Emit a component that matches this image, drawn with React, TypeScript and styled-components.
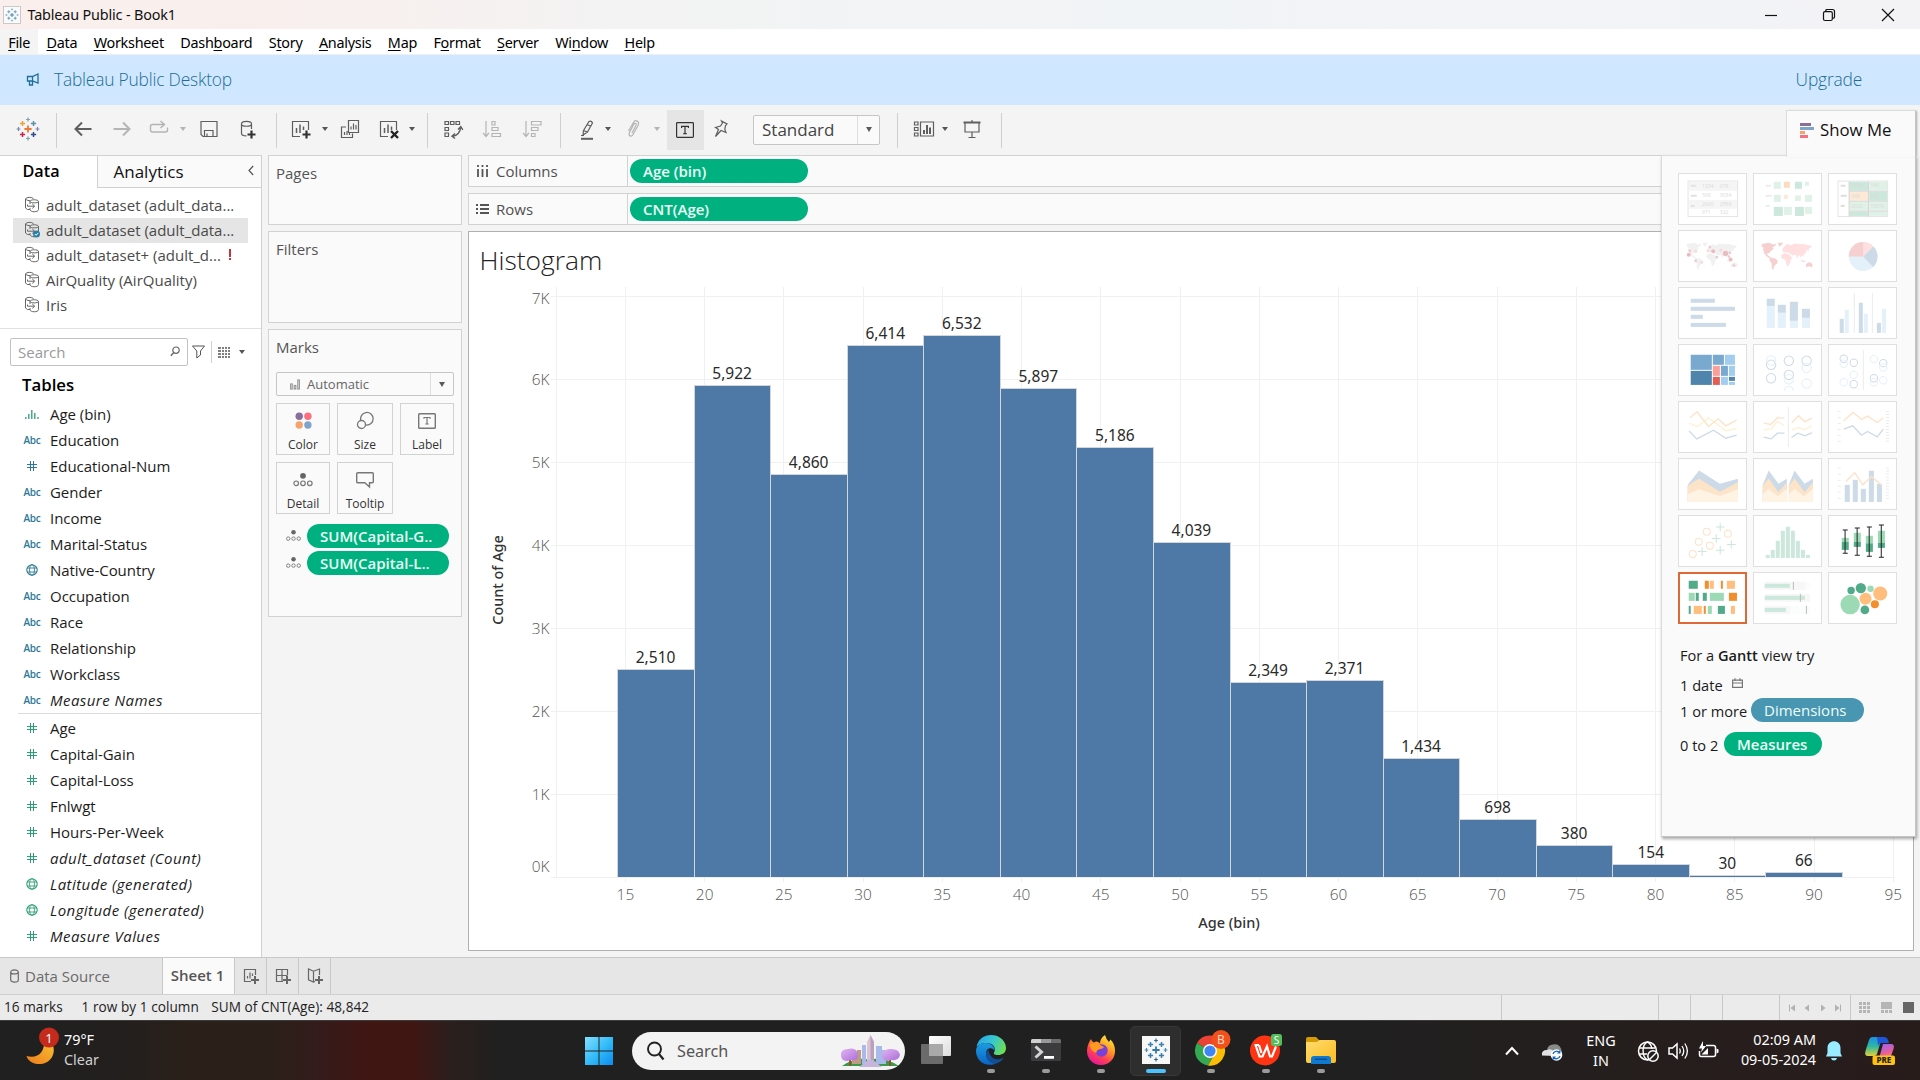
import React from "react";
import styled, { createGlobalStyle } from "styled-components";

const UI = `"Open Sans", "Liberation Sans", sans-serif`;
const SYS = `"Noto Sans", "Open Sans", sans-serif`;

const GlobalStyle = createGlobalStyle`
  * { box-sizing: border-box; }
  html, body { margin: 0; padding: 0; overflow: hidden; }
  body { font-family: ${UI}; color: #1b1b1b; background: #f4f4f4; }
  svg { display: block; flex: none; }
`;

const Window = styled.div`
  position: relative;
  width: 1920px;
  height: 1080px;
  display: flex;
  flex-direction: column;
  overflow: hidden;
  background: #f4f4f4;
  white-space: nowrap;
`;

/* ---------- title, menu, banner ---------- */
const TitleBar = styled.header`
  height: 29px;
  display: flex;
  align-items: center;
  padding: 0 3px 0 3px;
  background: linear-gradient(90deg, #faefed 0%, #f8f0ee 18%, #f3f3f3 32%, #f1f4f6 60%, #f3f3f6 100%);
  font: 14.4px ${SYS};
  letter-spacing: -0.16px;
  color: #111;
`;
const AppBadge = styled.span`
  width: 18px;
  height: 18px;
  margin-right: 6.5px;
  background: #fafafa;
  border: 1px solid #c9c9c9;
  display: grid;
  place-items: center;
`;
const WindowControls = styled.div`
  margin-left: auto;
  display: flex;
`;
const WindowButton = styled.span`
  width: 58.5px;
  display: flex;
  justify-content: center;
`;
const MenuBar = styled.nav`
  height: 26px;
  display: flex;
  background: #fff;
  border-bottom: 1px solid #f0f0f0;
  font: 14.4px/27px ${SYS};
  letter-spacing: -0.27px;
  color: #000;
`;
const MenuItem = styled.span<{ $active?: boolean }>`
  padding: 0 8.2px;
  background: ${(p) => (p.$active ? "#f4f4f4" : "transparent")};
  u { text-underline-offset: 2px; text-decoration-thickness: 1px; }
`;
const Banner = styled.div`
  height: 50px;
  display: flex;
  align-items: center;
  padding: 0 58px 2px 26px;
  background: #cfe8ff;
  color: #1d6d96;
  font-size: 17.4px;
  font-weight: 350;
  letter-spacing: -0.2px;
`;
const BannerTitle = styled.span`
  margin-left: 14px;
  flex: 1;
`;

/* ---------- toolbar ---------- */
const Toolbar = styled.div`
  height: 50px;
  display: flex;
  align-items: center;
  padding-bottom: 3px;
`;
const Tool = styled.span<{ $gap: number; $faded?: boolean }>`
  width: 24px;
  height: 24px;
  margin-left: ${(p) => p.$gap}px;
  color: ${(p) => (p.$faded ? "#b4b4b4" : "#5e5e5e")};
`;
const Separator = styled.span<{ $gap: number }>`
  width: 1px;
  height: 35px;
  margin-top: 3px;
  margin-left: ${(p) => p.$gap}px;
  background: #cfcfcf;
`;
const Caret = styled.span<{ $gap?: number; $faded?: boolean; $wide?: boolean }>`
  width: 0;
  height: 0;
  margin-left: ${(p) => (p.$gap ?? 0) + 1}px;
  margin-right: 1px;
  border: ${(p) => (p.$wide ? 3.5 : 3)}px solid transparent;
  border-top: 4px solid ${(p) => (p.$faded ? "#b4b4b4" : "#555")};
  border-bottom: 0;
`;
const ActiveTool = styled.span`
  width: 37px;
  height: 40px;
  margin: 3px 0 0 6px;
  padding-right: 2px;
  display: grid;
  place-items: center;
  background: #e5e5e5;
  color: #333;
`;
const Combo = styled.div`
  width: 127px;
  height: 30px;
  margin: 2px 0 0 20px;
  display: flex;
  align-items: center;
  border: 1px solid #c6c6c6;
  border-radius: 2px;
  background: #fafafa;
  font-size: 17px;
  color: #444;
`;
const ComboText = styled.span`
  flex: 1;
  padding-left: 8px;
`;
const ComboArrow = styled.span<{ $w: number }>`
  width: ${(p) => p.$w}px;
  height: 100%;
  border-left: 1px solid #dedede;
  display: grid;
  place-items: center;
`;
const Triangle = styled.i`
  border: 3.5px solid transparent;
  border-top: 5px solid #5a5a5a;
  border-bottom: 0;
`;

/* ---------- data pane ---------- */
const Main = styled.main`
  height: 802px;
  display: flex;
`;
const DataPane = styled.section`
  width: 262px;
  border-right: 1px solid #d0d0d0;
  border-top: 1px solid #d0d0d0;
  background: #fff;
`;
const Tabs = styled.div`
  height: 32px;
  display: flex;
`;
const DataTab = styled.div`
  width: 97px;
  padding: 4px 0 0 22.5px;
  font: 600 16.2px/22px ${UI};
  color: #000;
`;
const AnalyticsTab = styled.div`
  flex: 1;
  display: flex;
  justify-content: space-between;
  padding: 4px 7px 0 15.5px;
  border-left: 1px solid #d0d0d0;
  border-bottom: 1px solid #d0d0d0;
  background: #fafafa;
  font-size: 17px;
  line-height: 23px;
  color: #111;
`;
const Sources = styled.div`
  height: 141px;
  padding: 5px 13px 0;
  border-bottom: 1px solid #e0e0e0;
`;
const Source = styled.div<{ $selected?: boolean }>`
  height: 25px;
  width: 235px;
  display: flex;
  align-items: center;
  gap: 6px;
  padding: 0 0 2px 11px;
  background: ${(p) => (p.$selected ? "#e5e5e5" : "transparent")};
  color: #4a4a4a;
  font-size: 15px;
`;
const Alert = styled.b`
  width: 2px;
  margin-left: 2px;
  height: 11px;
  border-top: 8px solid #c4323e;
  border-bottom: 2px solid #c4323e;
`;
const SearchRow = styled.div`
  display: flex;
  align-items: center;
  padding: 9px 0 0 10px;
`;
const SearchBox = styled.div`
  width: 178px;
  height: 28px;
  display: flex;
  align-items: center;
  justify-content: space-between;
  padding: 0 7px 1px;
  border: 1px solid #c2c2c2;
  border-radius: 2px;
  color: #9a9a9a;
  font-size: 15px;
`;
const Divide = styled.span`
  width: 1px;
  height: 22px;
  margin: 0 6px 0 2px;
  background: #d0d0d0;
`;
const TablesTitle = styled.h2`
  margin: 0;
  height: 36px;
  padding: 8px 0 0 22px;
  font: 600 16.8px/22px ${UI};
  color: #000;
`;
const Field = styled.div<{ $italic?: boolean }>`
  height: 26px;
  display: flex;
  align-items: center;
  padding-bottom: 2px;
  font-size: 15px;
  letter-spacing: ${(p) => (p.$italic ? 0.45 : -0.04)}px;
  font-style: ${(p) => (p.$italic ? "italic" : "normal")};
  color: #1c1c1c;
`;
const FieldIcon = styled.span<{ $measure: boolean }>`
  width: 50px;
  padding-left: 14px;
  display: flex;
  justify-content: center;
  font: 600 10px/12px ${UI};
  letter-spacing: -0.2px;
  color: ${(p) => (p.$measure ? "#2f9e76" : "#2d7896")};
`;
const FieldRule = styled.hr`
  margin: -1px 0 2px 18px;
  border: 0;
  height: 1px;
  background: #dcdcdc;
`;

/* ---------- cards ---------- */
const Cards = styled.section`
  width: 194px;
  margin: 0 6px;
  display: flex;
  flex-direction: column;
  gap: 6px;
`;
const Card = styled.div<{ $h: number }>`
  height: ${(p) => p.$h}px;
  padding: 6px 7px;
  border: 1px solid #d2d2d2;
  background: #fafafa;
`;
const CardTitle = styled.div`
  font-size: 15px;
  line-height: 23px;
  color: #555;
`;
const MarkType = styled.div`
  height: 24px;
  margin-top: 13px;
  display: flex;
  align-items: center;
  border: 1px solid #c6c6c6;
  border-radius: 2px;
  font-size: 13px;
  color: #666;
  svg { margin: 0 7px 0 13px; }
`;
const MarkTypeName = styled.span`
  flex: 1;
`;
const MarkGrid = styled.div`
  margin-top: 7px;
  display: grid;
  grid-template-columns: 54px 56px 54px;
  grid-auto-rows: 52px;
  gap: 7px;
`;
const MarkButton = styled.div`
  border: 1px solid #d2d2d2;
  display: flex;
  flex-direction: column;
  align-items: center;
  justify-content: space-between;
  padding: 6px 0 1px;
  font-size: 12px;
  line-height: 17px;
  color: #333;
`;
const MarkPills = styled.div`
  margin: 10px 0 0 10px;
  display: grid;
  gap: 3px;
`;
const MarkPillRow = styled.div`
  display: flex;
  align-items: center;
  gap: 6px;
`;
const Pill = styled.span<{ $w: number; $tone?: string }>`
  width: ${(p) => p.$w}px;
  height: 24px;
  padding-left: 13px;
  border-radius: 12px;
  background: ${(p) => p.$tone ?? "#00b180"};
  color: #ecfff7;
  font-size: 15px;
  font-weight: ${(p) => (p.$tone ? 500 : 600)};
  line-height: 25px;
`;

/* ---------- shelves and view ---------- */
const Workspace = styled.section`
  width: 1446px;
  display: flex;
  flex-direction: column;
  gap: 6px;
`;
const Shelf = styled.div`
  height: 32px;
  display: flex;
  align-items: center;
  border: 1px solid #d2d2d2;
  background: #fafafa;
`;
const ShelfName = styled.div`
  width: 159px;
  height: 100%;
  display: flex;
  align-items: center;
  gap: 7px;
  padding-left: 7px;
  margin-right: 2px;
  border-right: 1px solid #d2d2d2;
  font-size: 15px;
  color: #505050;
`;
const View = styled.div`
  height: 720px;
  border: 1px solid #b0b0b0;
  background: #fff;
  svg text { font-family: ${SYS}; }
  svg .light { font-family: ${UI}; font-weight: 300; }
`;

/* ---------- show me ---------- */
const ShowMeTab = styled.div`
  position: absolute;
  left: 1786px;
  top: 110px;
  width: 130px;
  height: 47px;
  z-index: 2;
  display: flex;
  align-items: center;
  gap: 5px;
  padding: 0 0 9px 13px;
  border: 1px solid #dcdcdc;
  border-bottom: 0;
  border-right-color: #c4c4c4;
  background: #fafafa;
  box-shadow: 2px 0 2px -1px rgba(0, 0, 0, 0.3);
  font-size: 16.8px;
  color: #111;
`;
const ShowMe = styled.aside`
  position: absolute;
  left: 1661px;
  top: 155px;
  width: 255px;
  height: 682px;
  padding: 17px 16px;
  border: 1px solid #dcdcdc;
  border-color: #dcdcdc #c4c4c4 #c4c4c4 #dcdcdc;
  background: #fafafa;
  box-shadow: 1px 2px 3px rgba(0, 0, 0, 0.35);
  font-size: 14.6px;
  color: #1a1a1a;
`;
const Thumbs = styled.div`
  display: grid;
  grid-template-columns: repeat(3, 69px);
  grid-auto-rows: 52px;
  gap: 5px 6px;
`;
const Thumb = styled.div<{ $chosen?: boolean }>`
  background: #fff;
  outline: ${(p) => (p.$chosen ? "2px solid #dd6a36" : "1px solid #dfdfdf")};
  outline-offset: ${(p) => (p.$chosen ? -2 : -1)}px;
`;
const Hint = styled.div<{ $gap: number }>`
  height: 24px;
  margin: ${(p) => p.$gap}px 0 0 2px;
  display: flex;
  align-items: center;
  line-height: 24px;
  b { font-weight: 600; }
`;
const HintText = styled.span<{ $w: number }>`
  width: ${(p) => p.$w}px;
  padding-top: 2px;
`;

/* ---------- bottom bars ---------- */
const SheetTabs = styled.div`
  height: 37px;
  display: flex;
  border-top: 1px solid #c8c8c8;
  background: #e6e6e6;
  font-size: 15px;
  line-height: 35px;
`;
const SourceTab = styled.div`
  width: 162px;
  padding-left: 10px;
  display: flex;
  align-items: center;
  gap: 6px;
  color: #6a6a6a;
`;
const SheetTab = styled.div`
  width: 73px;
  padding-right: 2px;
  border: solid #c8c8c8;
  border-width: 0 1px;
  background: #fafafa;
  font-weight: 600;
  text-align: center;
  color: #555;
`;
const NewTab = styled.div`
  width: 32px;
  border-right: 1px solid #c8c8c8;
  display: grid;
  place-items: center;
  color: #666;
`;
const StatusBar = styled.div`
  height: 26px;
  display: flex;
  padding-left: 4px;
  border-top: 1px solid #d0d0d0;
  background: #ebebeb;
  font-size: 13.6px;
  letter-spacing: 0.05px;
  line-height: 24px;
  color: #222;
`;
const StatusText = styled.span<{ $w: number }>`
  width: ${(p) => p.$w}px;
`;
const StatusCell = styled.span<{ $w: number }>`
  width: ${(p) => p.$w}px;
  border-left: 1px solid #c8c8c8;
  display: flex;
  align-items: center;
  justify-content: space-evenly;
`;
const ViewModes = styled(StatusCell)`
  justify-content: flex-start;
  gap: 11px;
  padding-left: 8px;
`;

/* ---------- taskbar ---------- */
const Taskbar = styled.footer`
  height: 60px;
  display: flex;
  align-items: center;
  border-top: 1px solid #3c3c3c;
  background: linear-gradient(90deg, #202020 0%, #221f1e 6%, #2b2019 10%, #2b2019 14%, #331c1b 16.5%, #401613 19%, #401613 21.5%, #2a1f1d 23.5%, #212020 26%, #202020 70%, #251e1d 86%, #281c1b 100%);
  font: 14.4px/20px ${SYS};
  color: #fff;
`;
const Weather = styled.div`
  width: 572px;
  display: flex;
  align-items: center;
  padding: 0 0 2px 24px;
  svg { margin-right: 4px; }
`;
const Dim = styled.div`
  color: #d0d0d0;
`;
const StartButton = styled.span`
  width: 60px;
  padding-left: 12px;
`;
const TaskSearch = styled.div`
  width: 273px;
  height: 38px;
  margin-right: 3px;
  display: flex;
  align-items: center;
  padding: 0 4px 0 13px;
  border-radius: 19px;
  background: #f3f3f3;
  color: #555;
  font-size: 16.2px;
`;
const TaskSearchText = styled.span`
  flex: 1;
  margin-left: 12px;
`;
const TaskItem = styled.div<{ $active?: boolean; $idle?: boolean }>`
  width: 51px;
  height: 50px;
  margin: 0 2px;
  display: flex;
  flex-direction: column;
  align-items: center;
  padding-top: 7px;
  border-radius: 5px;
  background: ${(p) => (p.$active ? "#2f2e2e" : "transparent")};
  border: 1px solid ${(p) => (p.$active ? "#383838" : "transparent")};
  &::after {
    content: "";
    width: ${(p) => (p.$active ? 20 : 8)}px;
    height: 4px;
    margin-top: 3px;
    border-radius: 2px;
    background: ${(p) => (p.$idle ? "transparent" : p.$active ? "#4cc2ff" : "#9a9a9a")};
  }
`;
const BadgedIcon = styled.svg`
  margin: -4px 0 0 5px;
`;
const Tray = styled.div`
  margin-left: auto;
  display: flex;
  align-items: center;
  padding-right: 24px;
`;
const CloudIcon = styled.svg`
  margin-left: 12px;
`;
const CopilotIcon = styled.svg`
  margin-left: 21px;
`;
const Lang = styled.div`
  width: 56px;
  text-align: center;
`;
const TrayIcons = styled.div`
  display: flex;
  gap: 9px;
  margin-left: 8px;
`;
const Clock = styled.div`
  width: 97px;
  text-align: right;
  margin: -2px 9px 0 0;
`;

/* ---------- icons ---------- */
type IconProps = { children: React.ReactNode; size?: number; w?: number; h?: number; vb?: string };
const Icon = ({ children, size = 24, w, h, vb }: IconProps) => (
  <svg width={w ?? size} height={h ?? size} viewBox={vb ?? `0 0 ${w ?? size} ${h ?? size}`} fill="none" stroke="currentColor" strokeWidth="1.2">
    {children}
  </svg>
);

const cross = (x: number, y: number, r: number) => `M${x - r} ${y}h${2 * r}M${x} ${y - r}v${2 * r}`;

const TableauMark = ({ size, colors }: { size: number; colors: string[] }) => (
  <svg width={size} height={size} viewBox="0 0 24 24" fill="none" strokeWidth="1.5">
    <path d={cross(12, 12, 3.6)} stroke={colors[0]} strokeWidth="1.8" />
    <path d={cross(6.5, 6.5, 2.6)} stroke={colors[1]} />
    <path d={cross(17.5, 6.5, 2.6)} stroke={colors[2]} />
    <path d={cross(6.5, 17.5, 2.6)} stroke={colors[3]} />
    <path d={cross(17.5, 17.5, 2.6)} stroke={colors[4]} />
    <path d={cross(12, 2.5, 1.9) + cross(12, 21.5, 1.9)} stroke={colors[5]} strokeWidth="1.2" />
    <path d={cross(2.5, 12, 1.9) + cross(21.5, 12, 1.9)} stroke={colors[6]} strokeWidth="1.2" />
  </svg>
);

const DataSourceIcon = ({ checked }: { checked?: boolean }) => (
  <Icon w={16} h={17}>
    <g stroke="#666" strokeWidth="1">
      <path d="M6 13.5H3.5L1.5 12V2.8C3 1 7 .8 9.5 2.5M1.5 3C3 4.5 5 4.8 6 4.5" />
      <path d="M6 5.5C6 3.2 14.5 3.2 14.5 5.5V13.5C14.5 16.5 6 16.5 6 13.5V12M6 5.5V8M6 5.5C6 7.3 14.5 7.3 14.5 5.5M3.5 8.5V10.2H10.5M8.3 8L10.7 10.2L8.3 12.4" />
    </g>
    {checked && (
      <>
        <circle cx="12.5" cy="13" r="3.5" fill="#2b7fa8" stroke="none" />
        <path d="M10.8 13l1.3 1.3 2.2-2.4" stroke="#fff" strokeWidth="1" />
      </>
    )}
  </Icon>
);

const FieldGlyph = ({ kind }: { kind: string }) => {
  if (kind === "abc") return <>Abc</>;
  if (kind === "num")
    return <Icon size={10}><path d="M3.5 0V10M6.5 0V10M0 3.5H10M0 6.5H10" strokeWidth="1" /></Icon>;
  if (kind === "geo")
    return (
      <Icon size={12}>
        <circle cx="6" cy="6" r="5.2" strokeWidth="1.1" />
        <ellipse cx="6" cy="6" rx="2.4" ry="5.2" strokeWidth=".9" />
        <path d="M1 4H11M1 8H11" strokeWidth=".9" />
      </Icon>
    );
  return <Icon w={14} h={10}><path d="M.8 8V10M3.8 5V10M6.8 1V10M9.8 4V10M13 8V10" strokeWidth="1.3" /></Icon>;
};

const DetailIcon = ({ size }: { size: number }) => (
  <Icon w={size} h={size * 0.75} vb="0 0 20 15">
    <circle cx="10" cy="3" r="3" fill="#666" stroke="none" />
    <circle cx="3" cy="11.5" r="2.3" stroke="#777" />
    <circle cx="10" cy="11.5" r="2.3" stroke="#777" />
    <circle cx="17" cy="11.5" r="2.3" stroke="#777" />
  </Icon>
);

const LabelIcon = ({ w, h, color }: { w: number; h: number; color: string }) => (
  <Icon w={w} h={h} vb="0 0 18 16">
    <g stroke={color}>
      <rect x=".6" y=".6" width="16.8" height="14.8" rx=".8" />
      <path d="M5.6 6V4.4H12.4V6M9 4.4V11.5M7.3 11.6H10.7" />
    </g>
  </Icon>
);

/* ---------- histogram ---------- */
const counts = [2510, 5922, 4860, 6414, 6532, 5897, 5186, 4039, 2349, 2371, 1434, 698, 380, 154, 30, 66];
const X0 = 618.1;
const BIN = 76.55;
const yOf = (v: number) => 877 - v * 0.083;
const ages = Array.from({ length: 17 }, (_, i) => 15 + i * 5);
const xOf = (age: number) => 625.4 + ((age - 15) / 5) * 79.24;
const labelY = (k: number) => (k === 0 ? 871.5 : k === 7 ? 304 : yOf(k * 1000) + 6.2);

const Histogram = () => (
  <svg width="1444" height="718" viewBox="469 232 1444 718">
    <text className="light" x="479.500" y="270" fontSize="26.4" fill="#222">Histogram</text>
    <g stroke="#f0f0f0" shapeRendering="crispEdges">
      {[0, 1, 2, 3, 4, 5, 6, 7].map((k) => (
        <line key={k} x1="551" x2="1895" y1={yOf(k * 1000) + 0.5} y2={yOf(k * 1000) + 0.5} />
      ))}
      <line x1="556.5" x2="556.5" y1="287" y2="877" />
      {ages.map((a) => <line key={a} x1={Math.floor(xOf(a)) + 0.5} x2={Math.floor(xOf(a)) + 0.5} y1="287" y2="882" />)}
    </g>
    <g fontSize="15.4" fill="#555">
      {[0, 1, 2, 3, 4, 5, 6, 7].map((k) => (
        <text className="light" key={k} x="549.500" y={labelY(k)} textAnchor="end">{k}K</text>
      ))}
      {ages.map((a) => <text className="light" key={a} x={xOf(a)} y="900" textAnchor="middle">{a}</text>)}
    </g>
    {counts.map((c, i) => {
      const left = Math.round(X0 + i * BIN);
      const right = Math.round(X0 + (i + 1) * BIN);
      const top = Math.round(yOf(c)) + 0.5;
      return (
        <g key={i}>
          <rect x={left} y={top} width={right - left} height={877 - top} fill="#4e79a7" shapeRendering="crispEdges" />
          <path d={`M${left - 0.5} 877V${top}H${right - 0.5}V877`} stroke="#d2d6da" fill="none" shapeRendering="crispEdges" />
          <text x={X0 + (i + 0.5) * BIN - 0.8} y={top - 6.8} fontSize="15.5" fill="#2a2a2a" textAnchor="middle">{c.toLocaleString("en-US")}</text>
        </g>
      );
    })}
    <text x="1229" y="928" fontSize="14.5" fontWeight="500" fill="#333" textAnchor="middle">Age (bin)</text>
    <text transform="translate(503 580) rotate(-90)" fontSize="14.4" fontWeight="500" fill="#333" textAnchor="middle">Count of Age</text>
  </svg>
);

/* ---------- show me thumbnails ---------- */
const R = ({ d, f }: { d: number[][]; f: string }) => (
  <>{d.map(([x, y, w, h], i) => <rect key={i} x={x} y={y} width={w} height={h} fill={f} />)}</>
);
const C = ({ d, r, f, s }: { d: number[][]; r: number; f?: string; s?: string }) => (
  <>{d.map(([x, y], i) => <circle key={i} cx={x} cy={y} r={r} fill={f ?? "none"} stroke={s ?? "none"} strokeWidth="3" />)}</>
);
const L = ({ d, s, w = 4 }: { d: string; s: string; w?: number }) => <path d={d} stroke={s} strokeWidth={w} fill="none" />;
const T = ({ d, size = 15 }: { d: [number, number, string][]; size?: number }) => (
  <g fontSize={size} fill="#dadada" fontFamily="Open Sans, sans-serif">
    {d.map(([x, y, t], i) => <text key={i} x={x} y={y}>{t}</text>)}
  </g>
);

const AMERICAS = "M26 42L48 38L60 43L70 41L66 48L58 52L62 56L52 64L48 70L44 68L42 74L50 80L58 84L66 84L74 92L72 100L66 104L62 112L60 121L56 112L56 100L50 92L50 84L40 78L34 70L30 58L32 52L26 50Z";
const EURASIA = "M88 54L94 50L98 44L104 42L112 46L124 40L136 42L150 42L176 48L172 53L166 54L168 62L160 60L158 68L152 72L150 80L146 76L142 82L138 74L132 84L128 74L120 76L112 72L106 68L98 66L92 68L88 62Z";
const AFRICA = "M86 72L98 69L108 73L114 80L118 82L112 90L110 100L104 109L100 104L98 92L94 88L86 84L84 78Z";
const OCEANIA = "M158 102L166 96L174 98L178 104L176 111L168 108L158 110ZM142 88L150 92L156 92L152 96L144 92Z";
const GREENLAND = "M74 38L90 38L84 46L78 50Z";

const thumbs: { vb: string; art: React.ReactNode; chosen?: boolean }[] = [
  { vb: "115 220 206 155", art: (<>
    <rect x="145" y="244" width="148" height="106" fill="#fff" stroke="#e4e4e4" strokeWidth="3" />
    <R f="#f5f5f5" d={[[147, 246, 144, 27], [147, 300, 144, 27]]} />
    <R f="#e2e2e2" d={[[153, 255, 15, 6], [153, 285, 18, 6], [153, 315, 12, 6]]} />
    <T d={[[187, 264, "1234"], [240, 264, "678"], [187, 292, "368"], [240, 292, "3034"], [187, 319, "2620"], [240, 319, "2559"], [187, 343, "971"], [240, 343, "322"]]} /></>) },
  { vb: "340 220 206 155", art: (<>
    <R f="#ececec" d={[[378, 255, 15, 6], [378, 285, 18, 6], [378, 315, 12, 6]]} />
    <R f="#e0f2e7" d={[[402, 246, 21, 21], [495, 246, 12, 12], [402, 285, 21, 21], [465, 287, 18, 16], [495, 285, 21, 21], [432, 321, 24, 24], [495, 321, 21, 21]]} />
    <R f="#cce7db" d={[[465, 246, 21, 21], [402, 321, 27, 27], [465, 321, 27, 27]]} />
    <R f="#fbdcc0" d={[[432, 246, 18, 18]]} /><R f="#fde9d5" d={[[432, 285, 12, 12]]} /></>) },
  { vb: "565 220 206 155", art: (<>
    <rect x="595" y="244" width="148" height="106" fill="#fff" stroke="#e4e4e4" strokeWidth="3" />
    <R f="#cce7db" d={[[628, 246, 57, 27], [688, 276, 54, 27], [628, 336, 57, 12]]} />
    <R f="#e0f2e7" d={[[688, 246, 54, 27], [628, 306, 57, 27], [688, 306, 54, 27], [688, 336, 54, 12]]} />
    <R f="#fde9d5" d={[[628, 276, 57, 27]]} />
    <L w={3} s="#d6d6d6" d="M628 245V350M686 245V350M628 274H742M628 304H742M628 334H742" />
    <R f="#dedede" d={[[603, 255, 14, 6], [603, 285, 18, 6], [603, 315, 12, 6]]} />
    <T d={[[634, 263, "1234"], [692, 263, "546"], [634, 294, "368"], [692, 294, "343"], [634, 324, "2620"], [692, 324, "53890"]]} /></>) },
  { vb: "0 0 206 155", art: (<>
    <path d={AMERICAS + EURASIA + AFRICA + OCEANIA + GREENLAND} fill="#f1f1f1" />
    <C f="#e9bcc1" r={6} d={[[32, 74], [105, 63], [157, 88]]} /><C f="#e9bcc1" r={8} d={[[142, 70]]} />
    <C f="#efc8cc" r={4} d={[[35, 62], [95, 51], [53, 92], [116, 81], [167, 106], [152, 79], [155, 68]]} />
    <C f="#fbdadb" r={4.5} d={[[53, 63], [90, 62], [71, 96], [128, 60]]} /></>) },
  { vb: "0 0 206 155", art: (<>
    <path d={AMERICAS + OCEANIA + GREENLAND} fill="#f6cfcf" /><path d={EURASIA + AFRICA} fill="#ffdfe0" /></>) },
  { vb: "565 391 206 155", art: (<>
    <circle cx="670" cy="470" r="43" fill="#e4f0fa" />
    <path d="M670 470L700 440A43 43 0 0 1 700 501Z" fill="#cddae7" />
    <path d="M670 470V427A43 43 0 0 1 700 440Z" fill="#ffdfe0" />
    <path d="M670 470H627A43 43 0 0 1 670 427Z" fill="#f6cfcf" /></>) },
  { vb: "115 562 206 155", art: <R f="#cddae7" d={[[153, 597, 72, 12], [153, 621, 132, 12], [153, 645, 36, 12], [153, 669, 105, 12]]} /> },
  { vb: "340 562 206 155", art: (<>
    <R f="#cddae7" d={[[381, 597, 24, 22], [414, 615, 24, 24], [450, 606, 24, 57], [486, 627, 24, 27]]} />
    <R f="#e4f0fa" d={[[381, 619, 24, 65], [414, 639, 24, 45], [450, 663, 24, 21], [486, 654, 24, 30]]} /></>) },
  { vb: "565 562 206 155", art: (<>
    <R f="#cddae7" d={[[600, 657, 12, 42], [657, 609, 12, 90], [711, 669, 12, 30]]} />
    <R f="#e4f0fa" d={[[615, 630, 12, 69], [672, 642, 12, 57], [726, 627, 12, 72]]} />
    <R f="#ececec" d={[[642, 579, 3, 120], [696, 579, 3, 120]]} /></>) },
  { vb: "115 733 206 155", art: (<>
    <R f="#7aa9cf" d={[[153, 765, 63, 45], [219, 765, 33, 30], [243, 798, 21, 30]]} />
    <R f="#a3cdee" d={[[255, 765, 30, 30], [267, 798, 18, 30], [243, 831, 21, 24], [267, 846, 18, 9]]} />
    <R f="#4f85ad" d={[[153, 813, 63, 42], [267, 831, 18, 12]]} />
    <R f="#fd9f99" d={[[219, 798, 21, 30]]} /><R f="#df5f55" d={[[219, 831, 21, 24]]} /></>) },
  { vb: "340 733 206 155", art: (<>
    <C s="#cddae7" r={14} d={[[394, 795], [394, 835], [447, 783], [447, 825], [500, 783]]} />
    <C s="#e4f0fa" r={14} d={[[394, 782], [447, 838], [500, 804], [500, 851]]} />
    <L w={3} s="#e4f0fa" d="M433 873A14 14 0 0 1 461 873" /></>) },
  { vb: "565 733 206 155", art: (<>
    <C s="#cddae7" r={11} d={[[612, 777], [642, 789], [642, 853], [730, 790], [702, 835]]} />
    <C s="#e4f0fa" r={11} d={[[612, 792], [642, 825], [612, 847], [702, 778], [730, 803], [702, 847], [730, 841]]} />
    <R f="#ececec" d={[[669, 751, 3, 120]]} /></>) },
  { vb: "115 904 206 155", art: (<>
    <L s="#fff1d2" d="M149 971L173 980L206 954L258 993L290 986" />
    <L s="#fde3c8" d="M151 954L172 936L206 980L235 957L258 978L290 961" />
    <L s="#cddae7" d="M148 993L171 1017L221 991L258 1015L290 1006" /></>) },
  { vb: "340 904 206 155", art: (<>
    <L s="#fff1d2" d="M372 990L393 988L413 965L433 977M455 990L476 983L495 990L515 978" />
    <L s="#fde3c8" d="M372 970L393 974L413 954L434 955M456 969L476 948L495 966L515 955" />
    <L s="#cddae7" d="M372 1012L394 1017L413 1000L434 1000M455 1013L474 1000L495 1008L516 999" />
    <R f="#ececec" d={[[444, 921, 3, 120]]} /></>) },
  { vb: "565 904 206 155", art: (<>
    <L s="#fde3c8" d="M612 963L640 938L665 959L683 949L712 968L730 954" />
    <L s="#cddae7" d="M612 988L639 978L665 1006L683 995L712 1011L730 988" />
    <L w={3} s="#ececec" d="M594 935H603M594 953H603M594 971H603M594 989H603M594 1007H603M594 1024H603M738 935H747M738 944H747M738 953H747M738 962H747M738 971H747M738 980H747M738 989H747M738 998H747M738 1007H747M738 1016H747M738 1024H747" /></>) },
  { vb: "115 -5 206 155", art: (<>
    <path d="M144 75L178 32L240 72L294 57V126H144Z" fill="#cddae7" />
    <path d="M144 78L178 56L240 96L294 67V126H144Z" fill="#fde3c8" />
    <path d="M144 102L178 88L240 108L294 88V126H144Z" fill="#fff3e4" /></>) },
  { vb: "340 -5 206 155", art: (<>
    <path d="M369 75L387 32L416 72L441 57V126H369ZM447 75L464 32L494 72L519 57V126H447Z" fill="#cddae7" />
    <path d="M369 78L387 56L416 97L441 67V126H369ZM447 78L464 56L494 97L519 67V126H447Z" fill="#fde3c8" />
    <path d="M369 102L387 87L414 109L441 87V126H369ZM447 102L464 87L492 109L519 87V126H447Z" fill="#fff3e4" /></>) },
  { vb: "565 -5 206 155", art: (<>
    <R f="#cddae7" d={[[615, 75, 15, 51], [639, 60, 15, 66], [663, 87, 15, 39], [687, 33, 15, 93], [711, 72, 15, 54]]} />
    <L s="#fde3c8" d="M618 65L645 39L669 75L695 50L726 77" />
    <L w={3} s="#ececec" d="M594 25H603M594 43H603M594 61H603M594 79H603M594 97H603M594 115H603M738 25H747M738 34H747M738 43H747M738 52H747M738 61H747M738 70H747M738 79H747M738 88H747M738 97H747M738 106H747M738 115H747" /></>) },
  { vb: "115 166 206 155", art: (<>
    <C s="#fde3c8" r={10.5} d={[[201, 216], [264, 222], [177, 246], [210, 258], [159, 282]]} />
    <L w={3} s="#cce7db" d={cross(241, 202, 13) + cross(229, 236, 13) + cross(274, 254, 13) + cross(187, 275, 13) + cross(241, 271, 13)} /></>) },
  { vb: "340 166 206 155", art: <R f="#cce7db" d={[[378, 285, 12, 9], [393, 270, 12, 24], [408, 243, 12, 51], [423, 213, 12, 81], [438, 201, 12, 93], [453, 213, 12, 81], [468, 243, 12, 51], [483, 270, 12, 24], [498, 285, 12, 9]]} /> },
  { vb: "565 166 206 155", art: (<>
    <R f="#9bdab5" d={[[606, 234, 21, 12], [642, 219, 21, 27], [678, 228, 21, 24], [714, 213, 21, 36]]} />
    <R f="#51ab88" d={[[606, 246, 21, 24], [642, 246, 21, 15], [678, 251, 21, 25], [714, 249, 21, 15]]} />
    <L w={3} s="#222" d="M616 211V280M609 211H624M609 280H624M652 205V286M645 205H660M645 286H660M688 202V289M681 202H696M681 289H696M724 196V292M717 196H732M717 292H732" /></>) },
  { vb: "115 337 206 155", chosen: true, art: (<>
    <R f="#51ab88" d={[[147, 363, 27, 24], [168, 399, 9, 24], [189, 399, 12, 24], [147, 438, 6, 24], [234, 438, 21, 24]]} />
    <R f="#9bdab5" d={[[147, 399, 18, 24], [210, 399, 42, 24], [204, 438, 12, 24]]} />
    <R f="#f28e2b" d={[[195, 363, 12, 24], [243, 363, 6, 24], [267, 399, 24, 24], [192, 438, 6, 24]]} />
    <R f="#ffbe7d" d={[[210, 363, 12, 24], [261, 363, 24, 24], [162, 438, 24, 24], [273, 438, 12, 24]]} /></>) },
  { vb: "340 337 206 155", art: (<>
    <R f="#f7f7f7" d={[[375, 366, 120, 24], [375, 402, 135, 24], [375, 438, 75, 24]]} />
    <R f="#fbfdfc" d={[[495, 366, 15, 24], [450, 438, 60, 24]]} />
    <R f="#cce7db" d={[[375, 372, 75, 12], [375, 408, 120, 12], [375, 444, 63, 12]]} />
    <R f="#bdbdbd" d={[[459, 366, 3, 24], [480, 402, 3, 24], [498, 438, 3, 24]]} /></>) },
  { vb: "565 337 206 155", art: (<>
    <C f="#9bdab5" r={29} d={[[631, 434]]} /><C f="#9bdab5" r={9.5} d={[[692, 387]]} />
    <C f="#51ab88" r={11} d={[[634, 392]]} /><C f="#51ab88" r={15.5} d={[[663, 385]]} /><C f="#51ab88" r={13} d={[[675, 450]]} />
    <C f="#ffbe7d" r={18} d={[[677, 417]]} /><C f="#ffbe7d" r={21} d={[[721, 401]]} /><C f="#f28e2b" r={12} d={[[705, 433]]} /></>) },
];

/* ---------- content ---------- */
const menus: [string, string, string][] = [
  ["", "F", "ile"], ["", "D", "ata"], ["", "W", "orksheet"], ["Dash", "b", "oard"], ["S", "t", "ory"], ["", "A", "nalysis"],
  ["", "M", "ap"], ["F", "o", "rmat"], ["", "S", "erver"], ["Wi", "n", "dow"], ["", "H", "elp"],
];
const sources = ["adult_dataset (adult_data...", "adult_dataset (adult_data...", "adult_dataset+ (adult_d...", "AirQuality (AirQuality)", "Iris"];
const dimensions: [string, string][] = [
  ["bin", "Age (bin)"], ["abc", "Education"], ["num", "Educational-Num"], ["abc", "Gender"], ["abc", "Income"], ["abc", "Marital-Status"],
  ["geo", "Native-Country"], ["abc", "Occupation"], ["abc", "Race"], ["abc", "Relationship"], ["abc", "Workclass"], ["abc", "Measure Names"],
];
const measures: [string, string][] = [
  ["num", "Age"], ["num", "Capital-Gain"], ["num", "Capital-Loss"], ["num", "Fnlwgt"], ["num", "Hours-Per-Week"],
  ["num", "adult_dataset (Count)"], ["geo", "Latitude (generated)"], ["geo", "Longitude (generated)"], ["num", "Measure Values"],
];

const SheetGlyph = () => (
  <>
    <path d="M11 19.5H3.5V4.5H19.5V13" />
    <path d="M7.5 16V11M11 16V7.5M14.5 13V9.5" strokeWidth="1.5" />
  </>
);

const ToolbarRow = () => (
  <Toolbar>
    <Tool $gap={16}><TableauMark size={24} colors={["#eb7b34", "#e8a33d", "#5c8fa8", "#c3264a", "#2f4a84", "#7ba0b8", "#7c86ad"]} /></Tool>
    <Separator $gap={16} />
    <Tool $gap={14}><Icon><path d="M20.5 12H4.5M11 5.5L4.5 12L11 18.5" strokeWidth="2" /></Icon></Tool>
    <Tool $gap={15} $faded><Icon><path d="M3.5 12H19.5M13 5.5L19.5 12L13 18.5" strokeWidth="2" /></Icon></Tool>
    <Tool $gap={13} $faded><Icon><path d="M16.5 7.5H5.5Q3.5 7.5 3.5 9.5V13Q3.5 15 5.5 15H18.5Q20.5 15 20.5 13V10.500M13.5 4L17.500 7.500L13.500 11" strokeWidth="1.4" /></Icon></Tool>
    <Caret $gap={8} $faded />
    <Tool $gap={10}><Icon><path d="M4 4.5H20V19.5H6L4 17.5ZM7.5 19.5V13.5H16V19.5M10 16.5V19.5" /></Icon></Tool>
    <Tool $gap={14}><Icon><path d="M6.5 7C6.5 3.6 16.5 3.6 16.5 7V12M6.5 7V16.5C6.5 18 8.5 18.8 11.5 18.9M6.5 7C6.5 10 16.5 10 16.5 7" /><path d={cross(16.5, 17.5, 4)} stroke="#333" strokeWidth="2.2" /></Icon></Tool>
    <Separator $gap={17} />
    <Tool $gap={12}><Icon><SheetGlyph /><path d={cross(17.5, 17.5, 4)} stroke="#333" strokeWidth="2.2" /></Icon></Tool>
    <Caret $gap={8} />
    <Tool $gap={9}><Icon><path d="M8 10H3.5V20.5H14.5V16.5M10.5 3.5H20.5V15.5H10.5ZM13 12.5V9.5M15.5 12.5V6.5M18 12.5V8M6.5 18V15M9 18V14M11.5 18V15" /></Icon></Tool>
    <Tool $gap={15}><Icon><SheetGlyph /><path d="M14 14L21 21M21 14L14 21" stroke="#222" strokeWidth="2.4" /></Icon></Tool>
    <Caret $gap={7} />
    <Separator $gap={11} />
    <Tool $gap={13}><Icon><path d="M4 4.5H7.5V7.5H4ZM9.5 4.5H13V7.5H9.5ZM15 4.5H18.5V7.5H15ZM4 10.5H7.5V13.5H4ZM4 16H7.5V19.5H4Z" /><path d="M19.5 10.5C19.5 15 16 19 11.5 19.3M17 12.5L19.8 9.6L21.8 12.8M14 16.6L11 19.3L14 21.5" strokeWidth="1.4" /></Icon></Tool>
    <Tool $gap={15} $faded><Icon><path d="M6 4V19M3 15.8L6 19.5L9 15.8M12 4.5H15V8H12ZM12 10.5H18V13.5H12ZM12 16.5H20.5V19.5H12Z" /></Icon></Tool>
    <Tool $gap={16} $faded><Icon><path d="M6 4V19M3 15.8L6 19.5L9 15.8M11.5 4.5H21V8H11.5ZM11.5 10.5H18V13.5H11.5ZM11.5 16.5H15V19.5H11.5Z" /></Icon></Tool>
    <Separator $gap={16} />
    <Tool $gap={14}><Icon><path d="M8.5 13.5L14 4.5Q16.5 3.5 17.5 6L12.5 15ZM8.5 13.5L8 18L12.5 15M12 7.5L16 9.5M6 18.5H9" /><path d="M6 21.8H18" strokeWidth="2" /></Icon></Tool>
    <Caret $gap={5} />
    <Tool $gap={9} $faded><Icon><path d="M11 16L15 8.5C16 6.5 13.8 5.5 12.8 7.3L8.5 15.5C7 18.8 10.3 20.5 12 17.5L17 8.5C19 4.2 14.5 2 12.3 5.7L7.5 14" /></Icon></Tool>
    <Caret $gap={8} $faded />
    <ActiveTool><LabelIcon w={18} h={16} color="#333" /></ActiveTool>
    <Tool $gap={5}><Icon><path d="M12.5 4L18 7L16.5 8.5L15.8 12.5L17 15.5L12 13.5L6.5 19.5L9.5 12.5L6.5 10.5L11.5 9L13.5 6Z" /></Icon></Tool>
    <Combo>
      <ComboText>Standard</ComboText>
      <ComboArrow $w={22}><Triangle /></ComboArrow>
    </Combo>
    <Separator $gap={17} />
    <Tool $gap={14}><Icon><path d="M2.5 5H6V8H2.5ZM2.5 10.5H6V13.5H2.5ZM2.5 16H6V19H2.5ZM8.5 5H21.5V19H8.5Z" /><path d="M12 17V13M15 17V8M18 17V10.5" strokeWidth="2" /></Icon></Tool>
    <Caret $gap={5} />
    <Tool $gap={11}><Icon><path d="M3.5 5.5H20.5" strokeWidth="2" /><path d="M5 6V15H19V6M12 15V20.5M8.5 20.5H15.5M12 3V5" /></Icon></Tool>
    <Separator $gap={17} />
  </Toolbar>
);

const DataPanel = () => (
  <DataPane>
    <Tabs>
      <DataTab>Data</DataTab>
      <AnalyticsTab>
        Analytics
        <Icon w={6} h={20}><path d="M5.2 6L1 10.500L5.2 15" stroke="#555" /></Icon>
      </AnalyticsTab>
    </Tabs>
    <Sources>
      {sources.map((s, i) => (
        <Source key={i} $selected={i === 1}>
          <DataSourceIcon checked={i === 1} />
          {s}
          {i === 2 && <Alert />}
        </Source>
      ))}
    </Sources>
    <SearchRow>
      <SearchBox>
        Search
        <Icon w={10} h={11}><circle cx="6" cy="4.2" r="3.2" stroke="#666" /><path d="M3.8 6.6L.8 9.8" stroke="#666" strokeWidth="1.4" /></Icon>
      </SearchBox>
      <svg width="21" height="14" viewBox="0 0 21 14" fill="none" stroke="#555"><path d="M4.5 1H16.5L12.5 6V10L8.8 13V6Z" /></svg>
      <Divide />
      <Icon w={12} h={11}><path d="M0 1H3M4 1H6M7 1H9M10 1H12M0 4H3M4 4H6M7 4H9M10 4H12M0 7H3M4 7H6M7 7H9M10 7H12M0 10H3M4 10H6M7 10H9M10 10H12" stroke="#555" strokeWidth="1.4" /></Icon>
      <Caret $gap={8} $wide />
    </SearchRow>
    <TablesTitle>Tables</TablesTitle>
    {dimensions.map(([kind, name]) => (
      <Field key={name} $italic={name === "Measure Names"}>
        <FieldIcon $measure={kind === "bin"}><FieldGlyph kind={kind} /></FieldIcon>
        {name}
      </Field>
    ))}
    <FieldRule />
    {measures.map(([kind, name], i) => (
      <Field key={name} $italic={i > 4}>
        <FieldIcon $measure><FieldGlyph kind={kind} /></FieldIcon>
        {name}
      </Field>
    ))}
  </DataPane>
);

const CardColumn = () => (
  <Cards>
    <Card $h={70}><CardTitle>Pages</CardTitle></Card>
    <Card $h={92}><CardTitle>Filters</CardTitle></Card>
    <Card $h={288}>
      <CardTitle>Marks</CardTitle>
      <MarkType>
        <Icon w={10} h={11}><g stroke="#9a9a9a"><rect x=".6" y="5" width="1.6" height="5" /><rect x="4.2" y="6.5" width="1.6" height="3.5" /><rect x="7.8" y="1" width="1.6" height="9" /></g></Icon>
        <MarkTypeName>Automatic</MarkTypeName>
        <ComboArrow $w={23}><Triangle /></ComboArrow>
      </MarkType>
      <MarkGrid>
        <MarkButton>
          <Icon w={17} h={21}><g stroke="none"><circle cx="4.2" cy="6.3" r="3.7" fill="#8a6d9b" /><circle cx="12.9" cy="6.3" r="3.7" fill="#fb6e7e" /><circle cx="4.2" cy="15" r="3.7" fill="#f5a26d" /><circle cx="12.9" cy="15" r="3.7" fill="#7fa4cc" /></g></Icon>
          Color
        </MarkButton>
        <MarkButton>
          <Icon w={19} h={21}><g stroke="#777" strokeWidth="1.3"><path d="M4.8 10.5A6.3 6.3 0 1 1 10 15" /><circle cx="5.5" cy="14.5" r="4" /></g></Icon>
          Size
        </MarkButton>
        <MarkButton>
          <Icon w={18} h={21}><g stroke="#777" strokeWidth="1.4"><rect x=".7" y="3.7" width="16.6" height="14.6" rx=".8" /><path d="M6 8.7V7.5H12V8.7M9 7.5V14M7.3 14H10.7" strokeWidth="1.2" /></g></Icon>
          Label
        </MarkButton>
        <MarkButton><Icon w={20} h={21}><circle cx="10" cy="6.8" r="2.9" fill="#666" stroke="none" /><g stroke="#777"><circle cx="3.2" cy="14.3" r="2.3" /><circle cx="10" cy="14.3" r="2.3" /><circle cx="16.8" cy="14.3" r="2.3" /></g></Icon>Detail</MarkButton>
        <MarkButton><Icon w={18} h={21}><path d="M1.7 3.7H16.3Q17.3 3.7 17.3 4.7V12.7Q17.3 13.7 16.3 13.7H13.5V18L8.8 13.7H1.7Q.7 13.7 .7 12.7V4.7Q.7 3.7 1.7 3.7Z" stroke="#777" strokeWidth="1.4" /></Icon>Tooltip</MarkButton>
      </MarkGrid>
      <MarkPills>
        <MarkPillRow><DetailIcon size={15} /><Pill $w={142}>SUM(Capital-G..</Pill></MarkPillRow>
        <MarkPillRow><DetailIcon size={15} /><Pill $w={142}>SUM(Capital-L..</Pill></MarkPillRow>
      </MarkPills>
    </Card>
  </Cards>
);

const ShowMePanel = () => (
  <>
    <ShowMe>
      <Thumbs>
        {thumbs.map((t, i) => (
          <Thumb key={i} $chosen={t.chosen}><svg width="69" height="52" viewBox={t.vb}>{t.art}</svg></Thumb>
        ))}
      </Thumbs>
      <Hint $gap={19}><span>For a <b>Gantt</b> view try</span></Hint>
      <Hint $gap={5}>
        <HintText $w={52}>1 date</HintText>
        <Icon w={11} h={14}><path d="M.6 3.2H10.4V10.4H.6ZM.6 6H10.4M3 1.2V4M8 1.2V4" stroke="#777" /></Icon>
      </Hint>
      <Hint $gap={2}><HintText $w={71}>1 or more</HintText><Pill $w={113} $tone="#4996b3">Dimensions</Pill></Hint>
      <Hint $gap={10}><HintText $w={44}>0 to 2</HintText><Pill $w={98}>Measures</Pill></Hint>
    </ShowMe>
    <ShowMeTab>
      <Icon w={15} h={16}><g stroke="none"><rect width="11" height="3" y="1" fill="#8a6d9b" /><rect y="5" width="14" height="3" fill="#7fa4cc" /><rect y="9" width="5" height="3" fill="#f5a26d" /><rect y="13" width="8" height="3" fill="#fb6e7e" /></g></Icon>
      Show Me
    </ShowMeTab>
  </>
);

const BottomBars = () => (
  <>
    <SheetTabs>
      <SourceTab>
        <Icon w={9} h={14}><path d="M.7 3C.7 .2 8.3 .2 8.3 3V11C8.3 13.8 .7 13.8 .7 11ZM.7 3C.7 5.6 8.3 5.6 8.3 3" /></Icon>
        Data Source
      </SourceTab>
      <SheetTab>Sheet 1</SheetTab>
      <NewTab><Icon size={18}><path d="M9 14.5H2.5V2.5H13.5V8M5.5 11.5V9M8 11.5V5.5M10.5 9V6.5" /><path d={cross(13, 13, 4)} strokeWidth="2" /></Icon></NewTab>
      <NewTab><Icon size={18}><path d="M9 14.5H2.5V2.5H13.5V8M8 2.5V14.5M2.5 8.5H13.5" /><path d={cross(13, 13, 4)} strokeWidth="2" /></Icon></NewTab>
      <NewTab><Icon size={18}><path d="M9 14.5L7.5 15L2.5 12.8V2L7.5 4.2L13.5 2V8M7.5 4.2V15" /><path d={cross(13, 13, 4)} strokeWidth="2" /></Icon></NewTab>
    </SheetTabs>
    <StatusBar>
      <StatusText $w={77.6}>16 marks</StatusText>
      <StatusText $w={129.6}>1 row by 1 column</StatusText>
      <StatusText $w={1289.8}>SUM of CNT(Age): 48,842</StatusText>
      <StatusCell $w={157} />
      <StatusCell $w={32} />
      <StatusCell $w={32} />
      <StatusCell $w={57} />
      <StatusCell $w={71}>
        <svg width="8" height="8" fill="#b2b2b2"><path d="M1 .5H2V7.5H1ZM7 .5V7.5L2.5 4Z" /></svg>
        <svg width="8" height="8" fill="#b2b2b2"><path d="M6 .5V7.5L1.5 4Z" /></svg>
        <svg width="8" height="8" fill="#b2b2b2"><path d="M2 .5V7.5L6.5 4Z" /></svg>
        <svg width="8" height="8" fill="#b2b2b2"><path d="M6 .5H7V7.5H6ZM1 .5V7.5L5.5 4Z" /></svg>
      </StatusCell>
      <ViewModes $w={70}>
        <svg width="11" height="11" fill="#b5b5b5"><path d="M0 0H3V3H0ZM4 0H7V3H4ZM8 0H11V3H8ZM0 4H3V7H0ZM4 4H7V7H4ZM8 4H11V7H8ZM0 8H3V11H0ZM4 8H7V11H4ZM8 8H11V11H8Z" /></svg>
        <svg width="11" height="11" fill="#b5b5b5"><path d="M0 0H11V7H0ZM0 8H3V11H0ZM4 8H7V11H4ZM8 8H11V11H8Z" /></svg>
        <svg width="11" height="11" fill="#666"><path d="M0 0H11V11H0Z" /></svg>
      </ViewModes>
    </StatusBar>
  </>
);

const TaskbarRow = () => (
  <Taskbar>
    <Weather>
      <svg width="36" height="46" viewBox="0 6 36 46">
        <defs><linearGradient id="moon" x1="1" y1="0" x2="0" y2="1"><stop offset="0" stopColor="#f7c231" /><stop offset="1" stopColor="#ee7a1e" /></linearGradient></defs>
        <path d="M28 22C33 32 27 42 17 43C9 43.5 4 40 2.5 35C14 38 21 31 20 20Z" fill="url(#moon)" />
        <circle cx="25" cy="16.5" r="10" fill="#c42b1c" />
        <text x="25" y="21.5" fontSize="13" textAnchor="middle" fill="#fff" fontFamily="Noto Sans, sans-serif">1</text>
      </svg>
      <div>79°F<Dim>Clear</Dim></div>
    </Weather>
    <StartButton>
      <svg width="30" height="30" viewBox="0 0 30 30">
        <defs><linearGradient id="win" x1="0" y1="0" x2="1" y2="1"><stop offset="0" stopColor="#84e0ff" /><stop offset=".5" stopColor="#35bdf8" /><stop offset="1" stopColor="#0a8cf0" /></linearGradient></defs>
        <path d="M1 1H14.5V14.5H1ZM15.5 1H29V14.5H15.5ZM1 15.5H14.5V29H1ZM15.5 15.5H29V29H15.5Z" fill="url(#win)" />
      </svg>
    </StartButton>
    <TaskSearch>
      <Icon w={20} h={20}><circle cx="9.5" cy="8" r="6.5" stroke="#222" strokeWidth="1.9" /><path d="M14 13L18.5 18.5" stroke="#222" strokeWidth="2.2" /></Icon>
      <TaskSearchText>Search</TaskSearchText>
      <svg width="62" height="34" viewBox="0 0 62 34">
        <defs><linearGradient id="tree" x1="0" y1="0" x2="1" y2="1"><stop offset="0" stopColor="#e3b3f4" /><stop offset="1" stopColor="#a96fd6" /></linearGradient></defs>
        <path d="M3 32Q18 22 30 26Q44 22 60 32Z" fill="#3a9a4c" />
        <path d="M18 16H22V30H18ZM13 20H18V30H13Z" fill="#c19a86" /><path d="M23 11H27V30H23ZM37 12H43V30H37ZM43 16H47V30H43Z" fill="#a9b9ea" />
        <path d="M28 30V8L31.5 1L35 8V30Z" fill="#dcc3d4" /><path d="M31.5 1L35 8V30H31.5Z" fill="#b9a0bd" />
        <path d="M10 24H12V32H10ZM50 24H52V32H50Z" fill="#9a4f2c" />
        <path d="M2 22Q1 15 9 15Q18 13 19 21Q20 27 12 26Q3 29 2 22Z" fill="url(#tree)" />
        <path d="M43 22Q43 16 50 15Q60 14 61 21Q60 27 52 26Q44 28 43 22Z" fill="url(#tree)" />
        <path d="M29 26H34L43 33H20Z" fill="#c7b4dc" />
      </svg>
    </TaskSearch>
    <TaskItem $idle>
      <svg width="30" height="32" viewBox="0 0 30 32"><defs><linearGradient id="tv" x1="0" y1="0" x2="1" y2="1"><stop offset="0" stopColor="#fff" /><stop offset="1" stopColor="#dcdcdc" /></linearGradient></defs><rect y="10" width="22" height="20" rx="1" fill="#6b6b6b" /><rect x="8" y="2" width="22" height="20" rx="1" fill="url(#tv)" /><path d="M8 10H22V22H8Z" fill="#a9a9a9" /></svg>
    </TaskItem>
    <TaskItem>
      <svg width="32" height="32" viewBox="0 0 32 32">
        <defs>
          <linearGradient id="e1" x1="0" y1=".3" x2="1" y2=".6"><stop offset="0" stopColor="#2aa7e6" /><stop offset=".5" stopColor="#36c6d3" /><stop offset="1" stopColor="#6fe04f" /></linearGradient>
          <linearGradient id="e2" x1="0" y1="0" x2="0" y2="1"><stop offset="0" stopColor="#1b9de2" /><stop offset="1" stopColor="#0a64c4" /></linearGradient>
        </defs>
        <path d="M1.5 13C3 5 9 1 16 1C25 1 31 7.5 31 14C31 19 27 21 23 21C19 21 18 19.500 19.500 17.500C21 14.500 18.500 9.500 12.500 9C7 8.600 3 11 1.500 13Z" fill="url(#e1)" />
        <path d="M1 17C1 12 5.500 8.500 11 9C17 9.500 20 13 19.500 17C18 12.500 11 13.500 11 19.500C11 25.500 16 30 21.500 29.500C10 34 1 26.500 1 17Z" fill="url(#e2)" />
        <path d="M11 20C11 26 16.500 30.500 21.500 29.500C25.500 28 28 25.500 29 23.500C22 27.500 14.500 24.500 13.500 16Q11 17 11 20Z" fill="#124f96" />
      </svg>
    </TaskItem>
    <TaskItem>
      <svg width="30" height="32" viewBox="0 0 30 32"><rect y="5" width="30" height="22" rx="1.5" fill="#3c3c3e" /><path d="M0 9V6.5Q0 5 1.5 5H10V9Z" fill="#cfcfcf" /><path d="M10 5H20V9H10Z" fill="#999" /><path d="M20 5H28.5Q30 5 30 6.5V9H20Z" fill="#6d6d6d" /><path d="M4.5 12.5L10.5 18L4.5 23.5" fill="none" stroke="#d4d4d4" strokeWidth="3" /><path d="M13 22H23V24.8H13Z" fill="#fff" /></svg>
    </TaskItem>
    <TaskItem>
      <svg width="30" height="32" viewBox="0 0 30 32">
        <defs><linearGradient id="ff" x1=".9" y1="0" x2=".3" y2="1"><stop offset="0" stopColor="#fff44f" /><stop offset=".4" stopColor="#ffa01e" /><stop offset=".7" stopColor="#ff4252" /><stop offset="1" stopColor="#e6169b" /></linearGradient></defs>
        <path d="M1 17C1 12 3 8 5 5Q5.5 8 8 8.5Q11 6 14 9.5Q14 4 19 1Q20 5 23 8L24.5 5.5C28 9 29 13 29 17C29 25 23 31 15 31C7 31 1 25 1 17Z" fill="url(#ff)" />
        <circle cx="15.5" cy="16.5" r="6.2" fill="#7a3fd6" />
        <path d="M4 10Q9 8 14 11L18 13Q17 15 14 15Q10 16 10.5 19Q4 17 4 10Z" fill="#ff9a1f" />
      </svg>
    </TaskItem>
    <TaskItem $active>
      <svg width="28" height="32" viewBox="0 0 28 32"><rect y="2" width="28" height="28" fill="#f7f7f7" /><g transform="translate(2 4)"><TableauMark size={24} colors={["#2f79ad", "#3a80ad", "#3a80ad", "#3a80ad", "#3a80ad", "#2f6d99", "#4a8bb5"]} /></g></svg>
    </TaskItem>
    <TaskItem>
      <BadgedIcon width="38" height="36" viewBox="0 0 38 36">
        <g transform="translate(1 5)">
          <path d="M15 15.5L2 8A15 15 0 0 1 28.5 9H15Z" fill="#ea4335" />
          <path d="M2 8A15 15 0 0 0 13 30.5L20 18.5L15 15.5Z" fill="#34a853" />
          <path d="M28.5 9A15 15 0 0 1 13 30.5L20 18.5L18 9Z" fill="#fbbc05" />
          <circle cx="15" cy="16" r="7" fill="#fff" /><circle cx="15" cy="16" r="5.6" fill="#3f86f4" />
        </g>
        <circle cx="27" cy="9.5" r="9.5" fill="#f2511b" />
        <text x="27" y="14" fontSize="12" textAnchor="middle" fill="#ffd9cc" fontFamily="Noto Sans, sans-serif">B</text>
      </BadgedIcon>
    </TaskItem>
    <TaskItem>
      <svg width="34" height="32" viewBox="0 0 34 32">
        <circle cx="16" cy="16.5" r="15" fill="#ff3413" />
        <path d="M5.5 11H10M6.5 11L10.500 22.500H13.500L18 12.500L21 22.500H23L27 12.500M10 11L12.500 19" fill="none" stroke="#fff" strokeWidth="2.2" />
        <rect x="22" y="0" width="11" height="12" rx="2.5" fill="#53be5c" />
        <text x="27.5" y="10" fontSize="10" textAnchor="middle" fill="#fff" fontFamily="Noto Sans, sans-serif">S</text>
      </svg>
    </TaskItem>
    <TaskItem>
      <svg width="30" height="32" viewBox="0 0 30 32">
        <defs><linearGradient id="fd" x1="0" y1="0" x2="1" y2="1"><stop offset="0" stopColor="#ffdc6e" /><stop offset="1" stopColor="#fcbc22" /></linearGradient></defs>
        <path d="M0 5Q0 3 2 3H10L13 6V12H0Z" fill="#d69a05" /><path d="M0 8H11L13.5 6H28Q30 6 30 8V27Q30 29 28 29H2Q0 29 0 27Z" fill="url(#fd)" />
        <path d="M5 30V25Q5 22 8 22H22Q25 22 25 25V30Z" fill="#0f79d0" /><path d="M9 25.3H21" stroke="#054b8a" strokeWidth="1.4" />
      </svg>
    </TaskItem>
    <Tray>
      <Icon w={14} h={10}><path d="M1 8.5L7 2L13 8.5" strokeWidth="2" /></Icon>
      <CloudIcon width="42" height="20" viewBox="0 0 42 20">
        <path d="M16 12Q15 4 22 3.5Q30 2 31 12Z" fill="#8a8a8a" /><path d="M11 14.5Q10 9 16 9Q22 6 25 15Z" fill="#e2e2e2" />
        <circle cx="25.5" cy="14" r="5.8" fill="#fff" /><path d="M22 13A3.8 3.8 0 0 1 28.5 11.5M29 15A3.8 3.8 0 0 1 22.5 16.5M28.8 9.5V12H26.3M22.2 18.5V16H24.7" stroke="#1565c0" strokeWidth="1.2" fill="none" />
      </CloudIcon>
      <Lang>ENG<br />IN</Lang>
      <TrayIcons>
        <Icon w={22} h={22}><circle cx="10.5" cy="11" r="9" strokeWidth="1.5" /><path d="M11 20C4 17 5 4 10.5 2C13 3 14.5 6 15 9M2 8H18.5M2 14H10" strokeWidth="1.4" /><circle cx="16" cy="16" r="5.2" fill="#241f1e" strokeWidth="1.5" /><path d="M12.5 19.5L19.5 12.5" strokeWidth="1.5" /></Icon>
        <Icon w={21} h={22}><path d="M1 8V14H4.5L9 18V4L4.5 8Z" strokeWidth="1.5" /><path d="M11.5 8.5Q13 11 11.5 13.5M14 6Q17.5 11 14 16M16.8 3.5Q22 11 16.8 18.5" strokeWidth="1.3" /></Icon>
        <Icon w={21} h={22}><path d="M8 5.5H15.5Q17.5 5.5 17.5 7.5V14.5Q17.5 16.5 15.5 16.5H3Q1.5 16.5 1.5 15V11" strokeWidth="1.5" /><path d="M18.5 8.5L20.5 9.5V12.5L18.5 13.5ZM5 1L1 8.5H4L3 12.5L8 6H5ZM3.5 14.5L10 8V14.5Z" fill="#fff" stroke="none" /></Icon>
      </TrayIcons>
      <Clock>02:09 AM<br />09-05-2024</Clock>
      <svg width="18" height="22" viewBox="0 0 18 22" fill="#99ebff"><path d="M1 16.5L2.5 13V8C2.5 -1 15.5 -1 15.5 8V13L17 16.5ZM6 18H12Q11.5 20.5 9 20.5Q6.5 20.5 6 18Z" /></svg>
      <CopilotIcon width="32" height="32" viewBox="0 0 32 32">
        <defs>
          <linearGradient id="c1" x1="0" y1="0" x2="0" y2="1"><stop offset="0" stopColor="#1b8fe8" /><stop offset=".5" stopColor="#2fb8a0" /><stop offset="1" stopColor="#e3d03a" /></linearGradient>
          <linearGradient id="c2" x1=".3" y1="0" x2=".7" y2="1"><stop offset="0" stopColor="#9a62f0" /><stop offset=".6" stopColor="#e8609a" /><stop offset="1" stopColor="#f79a55" /></linearGradient>
        </defs>
        <path d="M8 2H18L13 19Q12 21 10 21H4Q0 21 1.5 16L5 5Q6 2 8 2Z" fill="url(#c1)" /><path d="M13 2H20Q23 2 24 5L25 8H18Q15 8 14 11Z" fill="#1f55d8" />
        <path d="M19 9H27Q31 9 29.5 14L27 21Q26 24 22 24H13Q15 24 16 20Z" fill="url(#c2)" />
        <rect x="8.5" y="20.5" width="22.5" height="9.5" rx="2" fill="#ffc20e" />
        <text x="19.8" y="28.3" fontSize="8" fontWeight="800" textAnchor="middle" fill="#222" fontFamily="Noto Sans, sans-serif">PRE</text>
      </CopilotIcon>
    </Tray>
  </Taskbar>
);

export default function App() {
  return (
    <Window>
      <GlobalStyle />
      <TitleBar>
        <AppBadge><TableauMark size={14} colors={["#4c86ab", "#5f94b5", "#5f94b5", "#5f94b5", "#5f94b5", "#7fa9c3", "#7fa9c3"]} /></AppBadge>
        Tableau Public - Book1
        <WindowControls>
          <WindowButton><Icon size={14}><path d="M1 7.5H13" stroke="#111" /></Icon></WindowButton>
          <WindowButton><Icon size={14}><path d="M3.8 3.5V2.5Q3.8 1.5 5 1.5H10.5Q12.5 1.5 12.5 3.5V9Q12.5 10.2 11.5 10.2H10.5" stroke="#111" /><rect x="1.5" y="3.7" width="8.8" height="8.8" rx="1.5" stroke="#111" /></Icon></WindowButton>
          <WindowButton><Icon size={14}><path d="M1 1L13 13M13 1L1 13" stroke="#111" /></Icon></WindowButton>
        </WindowControls>
      </TitleBar>
      <MenuBar>
        {menus.map(([a, b, c], i) => (
          <MenuItem key={i} $active={i === 0}>{a}<u>{b}</u>{c}</MenuItem>
        ))}
      </MenuBar>
      <Banner>
        <Icon w={14} h={14}><path d="M1.500 4.500H6.500L12 2V11L6.500 9H1.500ZM3.500 9V13H6.500V9M6.500 4.500V9" strokeWidth="1.3" /></Icon>
        <BannerTitle>Tableau Public Desktop</BannerTitle>
        Upgrade
      </Banner>
      <ToolbarRow />
      <Main>
        <DataPanel />
        <CardColumn />
        <Workspace>
          <Shelf>
            <ShelfName>
              <Icon w={13} h={13}><path d="M2 0V2M6.5 0V2M11 0V2M2 4V12M6.5 4V12M11 4V12" stroke="#555" strokeWidth="1.8" /></Icon>
              Columns
            </ShelfName>
            <Pill $w={178}>Age (bin)</Pill>
          </Shelf>
          <Shelf>
            <ShelfName>
              <Icon w={13} h={13}><path d="M0 2H2M0 6H2M0 10H2M4 2H13M4 6H13M4 10H13" stroke="#555" strokeWidth="1.8" /></Icon>
              Rows
            </ShelfName>
            <Pill $w={178}>CNT(Age)</Pill>
          </Shelf>
          <View><Histogram /></View>
        </Workspace>
      </Main>
      <BottomBars />
      <TaskbarRow />
      <ShowMePanel />
    </Window>
  );
}
